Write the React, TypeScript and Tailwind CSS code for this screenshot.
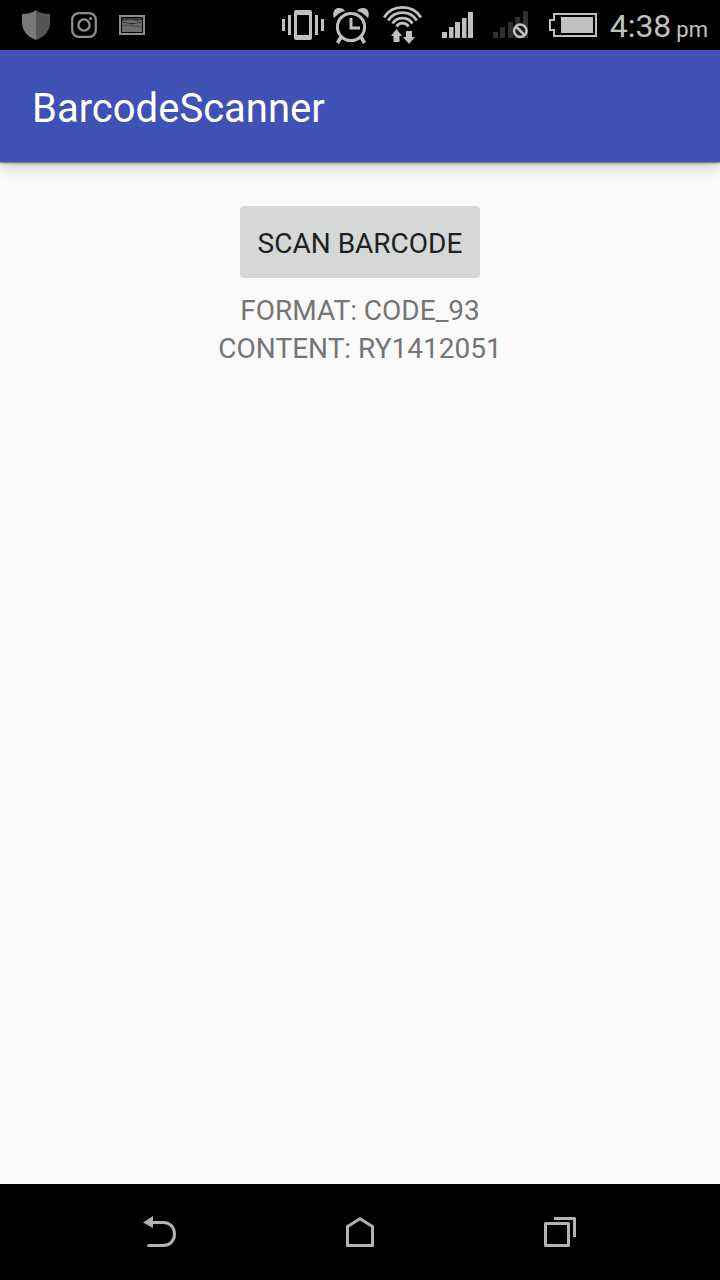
import React from "react";

function ShieldIcon() {
  return (
    <svg width="28" height="30" viewBox="0 0 28 30" aria-hidden="true">
      <path d="M14 0C10 3 5 4 0 4V13C0 21 6 27 14 30Z" fill="#787878" />
      <path d="M14 0C18 3 23 4 28 4V13C28 21 22 27 14 30Z" fill="#555555" />
    </svg>
  );
}

function CameraIcon() {
  return (
    <svg width="27" height="26" viewBox="0 0 27 26" fill="none" stroke="#8c8c8c" aria-hidden="true">
      <rect x="1.2" y="1.2" width="23.6" height="23.6" rx="6.5" strokeWidth="2.3" />
      <circle cx="13" cy="13" r="5.6" strokeWidth="2.4" />
      <circle cx="19.6" cy="6.6" r="1.6" fill="#8c8c8c" stroke="none" />
    </svg>
  );
}

function PictureIcon() {
  return (
    <svg width="26" height="20" viewBox="0 0 26 20" aria-hidden="true">
      <rect x="1" y="1" width="24" height="18" fill="#000" stroke="#8c8c8c" strokeWidth="2" />
      <rect x="3" y="3" width="20" height="14" fill="#6e6e6e" />
      <path d="M3 3H23V5L18 6L12 5L3 6Z" fill="#3c3c3c" />
      <path d="M3 7L9 8L13 9L18 8L23 7" stroke="#333" fill="none" />
      <path d="M3 11L9 10L14 11L23 12" stroke="#4c4c4c" fill="none" />
      <path d="M11 8H14V9H11Z" fill="#1c1c1c" />
    </svg>
  );
}

function VibrateIcon() {
  return (
    <svg width="42" height="30" viewBox="0 0 42 30" fill="#c0c0c0" aria-hidden="true">
      <path d="M0 9H3V21H0ZM6 5H9V25H6ZM33 5H36V25H33ZM39 9H42V21H39Z" />
      <path fillRule="evenodd" d="M14 0H28Q30 0 30 2V28Q30 30 28 30H14Q12 30 12 28V2Q12 0 14 0ZM15 5V25H27V5Z" />
    </svg>
  );
}

function AlarmIcon() {
  return (
    <svg width="36" height="38" viewBox="0 -2 36 38" fill="none" stroke="#c0c0c0" aria-hidden="true">
      <circle cx="18" cy="19" r="13.6" strokeWidth="3" />
      <path d="M18 10V20H27" strokeWidth="3" />
      <path d="M8 29L4.500 35M28 29L31.500 35" strokeWidth="3.500" />
      <path d="M1 10C-1 5 1 0 6 0C9 0 11 1 12 3C7 4 4 7 1 10Z" fill="#c0c0c0" stroke="none" />
      <path d="M35 10C37 5 35 0 30 0C27 0 25 1 24 3C29 4 32 7 35 10Z" fill="#c0c0c0" stroke="none" />
    </svg>
  );
}

function WifiIcon() {
  return (
    <svg width="39" height="38" viewBox="0 0 39 38" aria-hidden="true">
      <g fill="none" stroke="#c0c0c0" strokeWidth="2.800">
        <path d="M1 11.500A22 22 0 0 1 38 11.500" />
        <path d="M5.200 14.500A17 17 0 0 1 33.800 14.500" />
        <path d="M9.500 17.500A12 12 0 0 1 29.500 17.500" />
        <path d="M13.500 20.500A7 7 0 0 1 25.500 20.500" />
      </g>
      <path d="M13.500 23L19 30H16.500V36H10.500V30H8ZM26 38L32 31H29V25H23V31H20Z" fill="#c0c0c0" />
    </svg>
  );
}

function SignalIcon() {
  return (
    <svg width="31" height="26" viewBox="0 0 31 26" fill="#c0c0c0" aria-hidden="true">
      <path d="M0 20H5V26H0ZM7 15H11.500V26H7ZM13 10H18V26H13ZM20 6H24.500V26H20ZM26 0H31V26H26Z" />
    </svg>
  );
}

function NoSignalIcon() {
  return (
    <svg width="36" height="28" viewBox="0 0 36 28" aria-hidden="true">
      <path d="M0 21H5V27H0ZM7 16H12V27H7ZM15 11H20V27H15ZM22 6H27V27H22ZM30 0H35V27H30Z" fill="#303030" />
      <circle cx="27.300" cy="19.800" r="6.200" fill="#1c1c1c" stroke="#c0c0c0" strokeWidth="2.500" />
      <path d="M23 15.500L31.500 24" stroke="#c0c0c0" strokeWidth="2.500" />
    </svg>
  );
}

function BatteryIcon() {
  return (
    <svg width="48" height="24" viewBox="0 0 48 24" aria-hidden="true">
      <path d="M5 1H47V23H5V17H1V7H5Z" fill="none" stroke="#c0c0c0" strokeWidth="2" />
      <path d="M12 4H44V20H12Z" fill="#c0c0c0" />
    </svg>
  );
}

function StatusBar() {
  return (
    <div className="flex h-[50px] shrink-0 items-center justify-between bg-black pr-3 pl-[22px]">
      <div className="flex items-center gap-[21px]">
        <ShieldIcon />
        <CameraIcon />
        <PictureIcon />
      </div>
      <div className="flex items-center text-[#c0c0c0]">
        <div className="flex items-center gap-[9px]">
          <VibrateIcon />
          <AlarmIcon />
        </div>
        <div className="flex items-center gap-5 pr-[13px] pl-[14px]">
          <WifiIcon />
          <SignalIcon />
          <NoSignalIcon />
          <BatteryIcon />
        </div>
        <time className="flex items-baseline gap-[5px] pt-1.5 text-[32px] leading-10">
          <span>4:38</span>
          <span className="text-[22px]">pm</span>
        </time>
      </div>
    </div>
  );
}

function NavBar() {
  const button = "flex h-24 items-center justify-center";
  return (
    <nav className="grid shrink-0 grid-cols-3 bg-black px-[60px]">
      <button type="button" aria-label="Back" className={button}>
        <svg width="34" height="32" viewBox="0 0 34 32" aria-hidden="true">
          <path d="M8 6.500H20.500C27 6.500 31.500 11.500 31.500 18C31.500 24.500 27 29.500 20.500 29.500H5.500" fill="none" stroke="#b3b3b3" strokeWidth="3" strokeLinecap="round" />
          <path d="M0 6.500L10 0V12Z" fill="#b3b3b3" />
        </svg>
      </button>
      <button type="button" aria-label="Home" className={button}>
        <svg width="28" height="30" viewBox="0 0 28 30" aria-hidden="true">
          <path d="M1.500 28.500V9.500L14 1.800L26.500 9.500V28.500Z" fill="none" stroke="#b3b3b3" strokeWidth="3" strokeLinejoin="round" />
        </svg>
      </button>
      <button type="button" aria-label="Recent apps" className={button}>
        <svg width="32" height="30" viewBox="0 0 32 30" fill="none" stroke="#b3b3b3" strokeWidth="3" strokeLinejoin="round" aria-hidden="true">
          <path d="M1.500 6.500H24.500V28.500H1.500Z" />
          <path d="M10 1.500H30.500V20" />
        </svg>
      </button>
    </nav>
  );
}

export default function App() {
  return (
    <div className="flex min-h-screen flex-col bg-[#fafafa] font-['Roboto',sans-serif]">
      <StatusBar />
      <header className="flex h-28 shrink-0 items-center bg-[#3f51b5] px-8 pt-1.5 shadow-[0_1px_2px_rgba(0,0,0,0.55),0_4px_14px_rgba(0,0,0,0.22)]">
        <h1 className="text-[40px] leading-12 text-white">BarcodeScanner</h1>
      </header>
      <main className="flex grow flex-col items-center px-8 pt-11 text-[28px] text-[#757575]">
        <button type="button" className="h-[72px] rounded-[4px] bg-[#d6d7d7] px-[18px] pt-1 text-[#1e1f1f]">
          SCAN BARCODE
        </button>
        <p className="mt-[14px] leading-[38px]">FORMAT: CODE_93</p>
        <p className="leading-[38px]">CONTENT: RY1412051</p>
      </main>
      <NavBar />
    </div>
  );
}
